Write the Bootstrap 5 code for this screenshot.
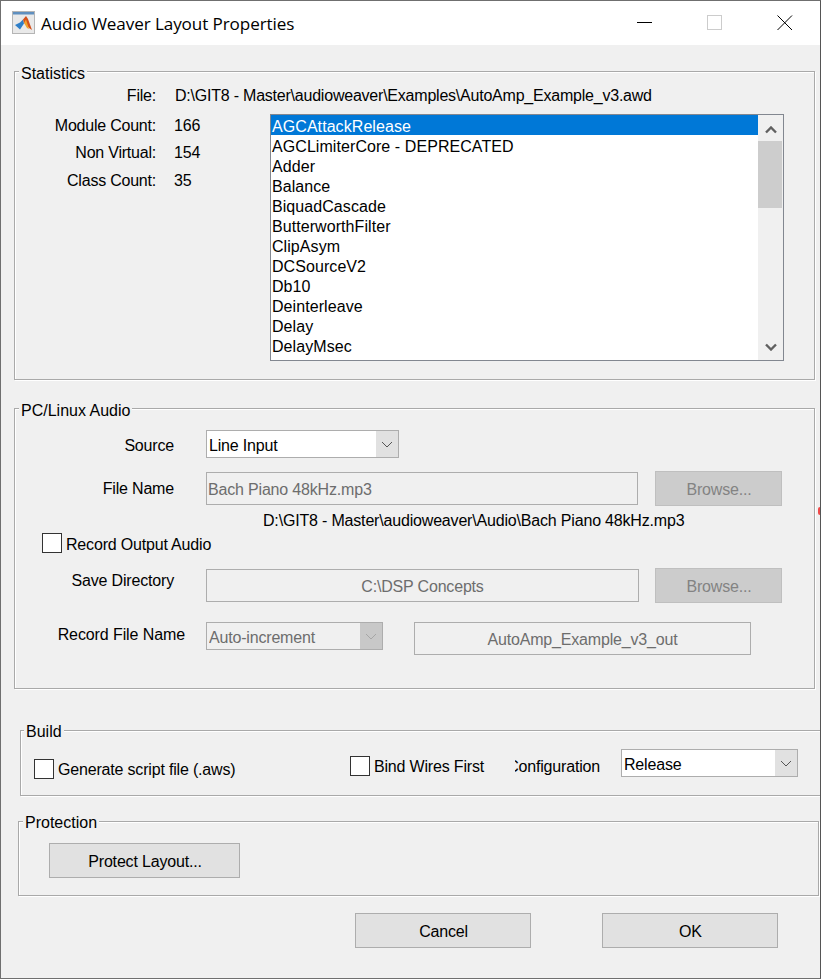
<!DOCTYPE html>
<html lang="en">
<head>
  <meta charset="UTF-8" />
  <title>Audio Weaver Layout Properties</title>
  <link rel="stylesheet" href="https://cdn.jsdelivr.net/npm/bootstrap@5.3.0/dist/css/bootstrap.min.css" />
  <style>
    html, body { margin: 0; padding: 0; background: #f0f0f0; }
    body { font-family: "Liberation Sans", Arial, sans-serif; font-size: 16px; line-height: 20px; letter-spacing: -.18px; color: #000; }

    .dlg { position: relative; width: 821px; height: 979px; border: 1px solid #6f6f6f; border-right-color: #555; overflow: hidden; background: #f0f0f0; }
    .edge-dot { position: absolute; right: -2px; top: 506px; width: 4px; height: 8px; border-radius: 2px; background: #f04848; }
    .titlebar { height: 44px; background: #fff; }
    .titlebar svg { display: block; }
    .title-icon { margin: 10px 5px 0 11px; }
    .title-text { font-family: "Open Sans", sans-serif; font-size: 17.1px; line-height: 24px; margin-top: 11px; letter-spacing: -.1px; }
    .win-btn { margin-top: 14px; }

    /* etched group boxes */
    .grp { border: 1px solid #a9a9a9; box-shadow: 1px 1px 0 #fff, inset 1px 1px 0 #fff; }
    .grp-title { display: table; margin: -8px 0 0 4px; padding: 0 2px; height: 20px; background: #f0f0f0; letter-spacing: 0; }
    .grp-stats { margin: 26px 0 0 13px; width: 801px; height: 309px; }
    .grp-audio { margin: 28px 0 0 13px; width: 801px; height: 281px; }
    .grp-build { margin: 41px 0 0 19px; width: 802px; height: 66px; border-right: 0; }
    .grp-build .grp-title { margin: -9px 0 0 3px; }
    .grp-prot { margin: 25px 0 0 17px; width: 801px; height: 75px; }
    .grp-prot .grp-title { margin: -9px 0 0 4px; }

    .lbl { text-align: right; flex: none; }
    .stat-file { height: 24px; align-items: center; }
    .stat-path { margin-left: 1px; letter-spacing: -.22px; }
    .stat-left { width: 255px; padding-top: 4px; flex: none; }
    .stat-row { height: 27.5px; align-items: center; }
    .w-stat { width: 141px; margin-right: 18px; letter-spacing: -.22px; }

    .modlist { width: 514px; height: 247px; margin-top: 6px; border: 1px solid #828790; background: #fff; }
    .modlist .list-group { width: 487px; border-radius: 0; }
    .modlist .list-group-item { border: 0; padding: 2px 1px 0; height: 20px; line-height: 20px; background: transparent; color: #000; font-size: 16px; letter-spacing: .07px; }
    .modlist .list-group-item.active { background: #0078d7; color: #fff; }
    .sbar { width: 25px; background: #f0f0f0; }
    .sbar-thumb { height: 67px; margin: 6px 1px 0 0; background: #cdcdcd; }
    .sbar svg { display: block; margin: 0 auto; }
    .sbar-up { height: 20px; padding-top: 11px; }
    .sbar-dn { padding-top: 135px; }

    .fld, .fld:disabled { height: 33px; border: 1px solid #adadad; border-radius: 0; background: #f0f0f0; color: #6d6d6d; font-size: 16px; letter-spacing: -.18px; padding: 2px 1px 0; box-shadow: none; opacity: 1; }
    .dd { height: 28px; border: 1px solid #adadad; border-radius: 0; font-size: 16px; letter-spacing: -.18px; padding: 3px 24px 0 2px; color: #000; box-shadow: none;
      background: url("data:image/svg+xml,%3Csvg xmlns='http://www.w3.org/2000/svg' width='22' height='26'%3E%3Cpath d='M6 11l5 5 5-5' fill='none' stroke='%23555'/%3E%3C/svg%3E") right center no-repeat,
                  linear-gradient(#e1e1e1, #e1e1e1) right center / 22px 100% no-repeat, #fff; }
    .dd:disabled { color: #6d6d6d; opacity: 1;
      background: url("data:image/svg+xml,%3Csvg xmlns='http://www.w3.org/2000/svg' width='22' height='26'%3E%3Cpath d='M6 11l5 5 5-5' fill='none' stroke='%23a6a6a6'/%3E%3C/svg%3E") right center no-repeat,
                  linear-gradient(#c8c8c8, #c8c8c8) right center / 22px 100% no-repeat, #f0f0f0; }

    .flat-btn { border: 1px solid #adadad; border-radius: 0; background: #e1e1e1; color: #000; font-size: 16px; letter-spacing: -.18px; line-height: 20px; padding: 3px 0 0 1px; height: 35px; }
    .flat-btn:disabled { background: #ccc; border-color: #bfbfbf; color: #838383; opacity: 1; width: 127px; margin-left: 17px; }

    .chk.form-check-input { width: 20px; height: 20px; margin: 0 4px 0 0; border: 1px solid #333; border-radius: 0; background-color: #fff; flex: none; }
    .chk-lbl { padding-top: 2px; }

    .w-aud { width: 159px; }
    .r-source { height: 28px; margin-top: 9px; }
    .r-source .lbl { padding-top: 4px; }
    .r-source .dd { width: 193px; margin-left: 32px; }
    .r-file { height: 35px; margin-top: 13px; }
    .r-file .fld { width: 432px; margin: 1px 0 0 32px; }
    .r-path { padding-left: 248px; height: 20px; margin-top: 5px; }
    .r-rec { padding-left: 27px; height: 20px; margin-top: 2px; }
    .r-rec .chk-lbl { padding-top: 4px; }
    .r-save { height: 35px; margin-top: 15px; }
    .r-save .lbl { padding-bottom: 10px; }
    .r-save .fld { width: 433px; margin: 1px 0 0 32px; padding-top: 3px; text-align: center; }
    .r-save .flat-btn { margin-left: 16px; }
    .r-name { margin-top: 19px; }
    .r-name .lbl { width: 170px; margin-top: 3px; letter-spacing: -.1px; }
    .r-name .dd { width: 177px; margin-left: 21px; }
    .r-name .fld { width: 337px; margin-left: 31px; text-align: center; }

    .r-build { padding-left: 13px; margin-top: 7px; }
    .build-a { width: 316px; margin-top: 9px; flex: none; }
    .build-b { width: 135px; margin-top: 6px; flex: none; }
    .cfg-clip { width: 85px; margin: 8px 0 0 30px; overflow: hidden; direction: rtl; white-space: nowrap; flex: none; }
    .r-build .dd { width: 177px; margin-left: 21px; }

    .prot-btn { width: 191px; margin: 10px 0 0 30px; }
    .foot-btn { width: 176px; }
    .foot { margin-top: 17px; padding-left: 354px; gap: 71px; }
  </style>
</head>
<body>
  <div class="dlg">
    <div class="edge-dot"></div>
    <div class="titlebar d-flex">
      <svg class="title-icon" width="24" height="24" viewBox="0 0 24 24">
        <rect x="0.5" y="0.5" width="22" height="22" fill="#e9e9e9" stroke="#b5b5b5"/>
        <rect x="1" y="1" width="21" height="2.5" fill="#5f8fbf"/>
        <path d="M3 14l5-2.5 3-3 1 4-4 6z" fill="#2f7fc8"/>
        <path d="M11 8.500l3-3.500 2 3 4 11-3-2-3-4-2-1z" fill="#d4501c"/>
        <path d="M12 12l2-3.500 3 9.500-2-1z" fill="#f2a32c"/>
      </svg>
      <div class="title-text flex-grow-1">Audio Weaver Layout Properties</div>
      <svg class="win-btn" width="16" height="16" viewBox="0 0 16 16"><path d="M0 7.5h15" stroke="#000"/></svg>
      <svg class="win-btn" width="16" height="16" viewBox="0 0 16 16" style="margin-left:54px"><rect x=".5" y=".5" width="14" height="14" fill="none" stroke="#ccc"/></svg>
      <svg class="win-btn" width="16" height="16" viewBox="0 0 16 16" style="margin:14px 27px 0 54px"><path d="M.5.5l14.5 14.5M15 .5L.5 15" stroke="#000"/></svg>
    </div>

    <div class="grp grp-stats">
      <div class="grp-title">Statistics</div>
      <div class="d-flex stat-file">
        <div class="lbl w-stat">File:</div>
        <div class="stat-path">D:\GIT8 - Master\audioweaver\Examples\AutoAmp_Example_v3.awd</div>
      </div>
      <div class="d-flex">
        <div class="stat-left">
          <div class="d-flex stat-row"><div class="lbl w-stat">Module Count:</div><div>166</div></div>
          <div class="d-flex stat-row"><div class="lbl w-stat">Non Virtual:</div><div>154</div></div>
          <div class="d-flex stat-row"><div class="lbl w-stat">Class Count:</div><div>35</div></div>
        </div>
        <div class="modlist d-flex">
          <div class="list-group">
            <div class="list-group-item active">AGCAttackRelease</div>
            <div class="list-group-item">AGCLimiterCore - DEPRECATED</div>
            <div class="list-group-item">Adder</div>
            <div class="list-group-item">Balance</div>
            <div class="list-group-item">BiquadCascade</div>
            <div class="list-group-item">ButterworthFilter</div>
            <div class="list-group-item">ClipAsym</div>
            <div class="list-group-item">DCSourceV2</div>
            <div class="list-group-item">Db10</div>
            <div class="list-group-item">Deinterleave</div>
            <div class="list-group-item">Delay</div>
            <div class="list-group-item">DelayMsec</div>
          </div>
          <div class="sbar flex-shrink-0">
            <div class="sbar-up"><svg width="12" height="8" viewBox="0 0 12 8"><path d="M1 6.500l5-5 5 5" fill="none" stroke="#606060" stroke-width="2.400"/></svg></div>
            <div class="sbar-thumb"></div>
            <div class="sbar-dn"><svg width="12" height="8" viewBox="0 0 12 8"><path d="M1 1.500l5 5 5-5" fill="none" stroke="#606060" stroke-width="2.400"/></svg></div>
          </div>
        </div>
      </div>
    </div>

    <div class="grp grp-audio">
      <div class="grp-title">PC/Linux Audio</div>
      <div class="d-flex align-items-center r-source">
        <div class="lbl w-aud">Source</div>
        <select class="form-select dd"><option>Line Input</option></select>
      </div>
      <div class="d-flex r-file">
        <div class="lbl w-aud align-self-center">File Name</div>
        <input class="form-control fld" disabled value="Bach Piano 48kHz.mp3" />
        <button class="btn flat-btn" disabled>Browse...</button>
      </div>
      <div class="r-path">D:\GIT8 - Master\audioweaver\Audio\Bach Piano 48kHz.mp3</div>
      <div class="d-flex align-items-center r-rec">
        <input type="checkbox" class="form-check-input chk" />
        <div class="chk-lbl">Record Output Audio</div>
      </div>
      <div class="d-flex r-save">
        <div class="lbl w-aud align-self-center">Save Directory</div>
        <input class="form-control fld" disabled value="C:\DSP Concepts" />
        <button class="btn flat-btn" disabled>Browse...</button>
      </div>
      <div class="d-flex align-items-start r-name">
        <div class="lbl">Record File Name</div>
        <select class="form-select dd" disabled><option>Auto-increment</option></select>
        <input class="form-control fld" disabled value="AutoAmp_Example_v3_out" />
      </div>
    </div>

    <div class="grp grp-build">
      <div class="grp-title">Build</div>
      <div class="d-flex align-items-start r-build">
        <div class="d-flex align-items-center build-a"><input type="checkbox" class="form-check-input chk" /><div class="chk-lbl">Generate script file (.aws)</div></div>
        <div class="d-flex align-items-center build-b"><input type="checkbox" class="form-check-input chk" /><div class="chk-lbl">Bind Wires First</div></div>
        <div class="cfg-clip">Configuration</div>
        <select class="form-select dd"><option>Release</option></select>
      </div>
    </div>

    <div class="grp grp-prot">
      <div class="grp-title">Protection</div>
      <button class="btn flat-btn prot-btn d-block">Protect Layout...</button>
    </div>

    <div class="d-flex foot">
      <button class="btn flat-btn foot-btn">Cancel</button>
      <button class="btn flat-btn foot-btn">OK</button>
    </div>
  </div>
  <script src="https://cdn.jsdelivr.net/npm/bootstrap@5.3.0/dist/js/bootstrap.bundle.min.js"></script>
</body>
</html>
